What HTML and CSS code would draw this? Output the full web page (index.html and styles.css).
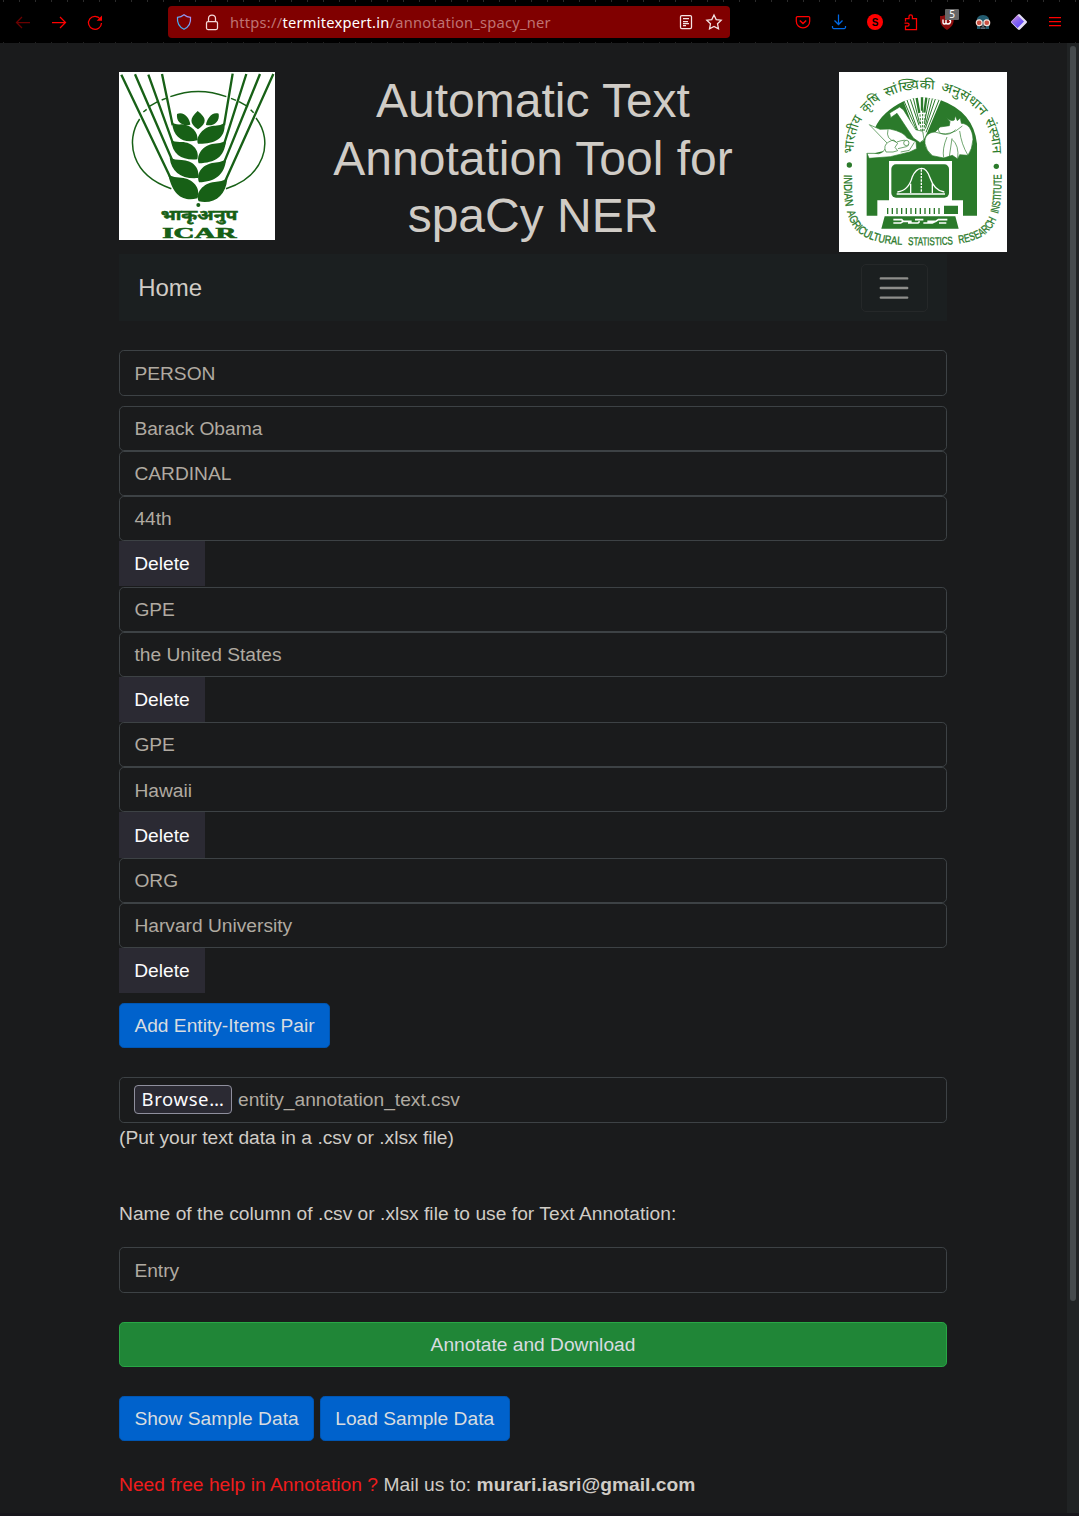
FILE: index.html
```html
<!DOCTYPE html>
<html lang="en">
<head>
<meta charset="utf-8">
<title>Automatic Text Annotation Tool for spaCy NER</title>
<link rel="stylesheet" href="styles.css">
</head>
<body>
<div class="toolbar">
  <div class="nav-icons">
    <svg class="icon" viewBox="0 0 16 16" stroke="#6b0000"><path d="M15 8.500H1.500M7 3 1.500 8.500 7 14"/></svg>
    <svg class="icon" viewBox="0 0 16 16" stroke="#f00"><path d="M1 8.500h13.500M9 3l5.500 5.500L9 14"/></svg>
    <svg class="icon" viewBox="0 0 16 16" stroke="#f00"><path d="M13.300 5A6.500 6.500 0 1 0 14.500 9"/><path d="M15 1.500v5.300h-5.300z" fill="#f00" stroke="none"/></svg>
  </div>
  <div class="urlbar">
    <svg class="icon" viewBox="0 0 16 16"><defs><linearGradient id="shield" x1="0" y1="1" x2="1" y2="0"><stop offset="0" stop-color="#20b6f0"/><stop offset="1" stop-color="#b68cf0"/></linearGradient></defs><path stroke="url(#shield)" d="M8 .8C6 2.400 3.800 3.200 1.500 3.400c-.5 5 1.200 9.400 6.500 11.800 5.300-2.400 7-6.800 6.500-11.800C12.200 3.200 10 2.400 8 .8Z"/></svg>
    <svg class="icon lock" viewBox="0 0 16 16" stroke="#f4d9d9"><rect x="2.500" y="7.500" width="11" height="8" rx="1.500"/><path d="M4.500 7.500v-3a3.500 3.500 0 0 1 7 0v3"/></svg>
    <span class="url">https://<b>termitexpert.in</b>/annotation_spacy_ner</span>
    <svg class="icon" viewBox="0 0 16 16" stroke="#f4e4e4"><rect x="2.500" y="1.500" width="11" height="13" rx="1.300"/><path d="M5 4.500h6M5 7.500h5M5 9.500h6M5 11.500h3"/></svg>
    <svg class="icon star" viewBox="0 0 16 16" stroke="#f4e4e4"><path d="m8 .9 2.200 4.700 5 .6-3.700 3.500 1 5.200L8 12.400l-4.500 2.500 1-5.200L.8 6.200l5-.6Z"/></svg>
  </div>
  <div class="extensions">
    <svg class="icon" viewBox="0 0 16 16" stroke="#f00"><path d="M2.500 2.500h11a1.200 1.200 0 0 1 1.200 1.200v3.500a6.700 6.700 0 0 1-13.400 0V3.700a1.200 1.200 0 0 1 1.200-1.200Z"/><path d="m4.800 6.500 3.200 3 3.200-3" stroke-width="1.500"/></svg>
    <svg class="icon" viewBox="0 0 16 16" stroke="#0069e6"><path d="M7.500.5v10M3.500 6.500l4 4 4-4M1.500 12v1.200a1.300 1.300 0 0 0 1.300 1.300h10.400a1.300 1.300 0 0 0 1.300-1.300V12"/></svg>
    <svg class="icon" viewBox="0 0 16 16"><circle cx="8" cy="8" r="8" fill="#f00"/><text x="8" y="11.500" class="s-mark">S</text></svg>
    <svg class="icon" viewBox="0 0 16 16" stroke="#f00"><path d="M2.500 7.500v-3H6V2.500a1.700 1.700 0 0 1 3.400 0v2h4.100v11h-11v-3.300h2a1.600 1.600 0 0 0 0-3.200h-3"/></svg>
    <span class="blocker"><svg class="icon" viewBox="0 0 16 16"><path fill="#8b0c0c" d="M8 0C6 1.400 4 2 1 2c0 7 .8 10 7 14 6.200-4 7-7 7-14C12 2 10 1.400 8 0Z"/><path d="M4 5.500v3q0 1.500 1.500 1.500T7 8.500V6m0 2.500Q7 10 9 10t2.500-2-1.500-2" stroke="#fff" stroke-width="1.400"/></svg><span class="badge">5</span></span>
    <svg class="icon" viewBox="0 0 16 16"><path fill="#235c70" d="M2 7C1 4 4 1 8 1s7 3 6 6v8H2Z"/><path fill="#111" d="M5 10h6v5H5z"/><path stroke="#789" d="M5.500 14h5M8 10v3"/><circle cx="4.200" cy="8.800" r="2.900" fill="#c95043" stroke="#f5ded5" stroke-width="1.200"/><circle cx="11.800" cy="8.800" r="2.900" fill="#c95043" stroke="#f5ded5" stroke-width="1.200"/></svg>
    <svg class="icon" viewBox="0 0 16 16"><defs><linearGradient id="gem" x1="0" y1="0" x2=".7" y2="1"><stop offset="0" stop-color="#f5a5cf"/><stop offset=".5" stop-color="#8a68ee"/><stop offset="1" stop-color="#5b45ff"/></linearGradient></defs><path fill="#e2dcf4" d="M7 .4q1-.8 2 0l6.500 6.500q1 1 0 2L9 15.600q-1 .8-2 0L.5 9q-1-1 0-2Z"/><path fill="url(#gem)" d="M6.500.9 13 7.400 6.600 13.900.8 8.600q-.8-.9 0-1.700Z"/></svg>
    <svg class="icon" viewBox="0 0 16 16" stroke="#f00"><path d="M2 3.500h12M2 7.500h12M2 11.500h12"/></svg>
  </div>
</div>
<div class="viewport">
  <main class="container">
    <header class="header">
      <svg class="logo-icar" viewBox="27 30 468 504">
        <rect x="27" y="30" width="468" height="504" fill="#fff"/>
        <g fill="none" stroke="#176016" stroke-width="4.500">
          <path d="M181 104Q265 73 349 104M363 109l15 6m9 4 27 15m8 9 9 9M168 109l-13 5m-12 5-25 14m-8 9-10 8M89 171C46 235 62 340 184 380M438 168C493 240 462 344 348 380"/>
          <path stroke-width="7" d="M34 38 190 365M75 37 189 300M115 38 190 247M156 36 188 190M368 35 342 190M409 36 342 247M450 36 342 302M490 36 342 365"/>
        </g>
        <g fill="#176016">
          <path d="M263 147C238 170 238 184 264 202 292 182 290 168 263 147ZM201 156C198 179 216 194 241 188 240 171 222 147 201 156ZM326 155C330 178 312 194 288 189 290 171 306 148 326 155Z"/>
          <path d="M186 181Q194 189 215 187C245 188 266 212 262 235 225 245 190 232 186 181ZM344 183Q330 192 312 191C280 193 256 224 264 245 310 246 347 234 344 183Z"/>
          <path d="M183 235Q194 241 215 240C247 240 270 265 262 292 218 296 188 280 183 235ZM348 237Q330 245 312 245C280 249 258 276 266 304 316 302 343 286 348 237Z"/>
          <path d="M179 287Q194 294 215 294C247 295 271 317 264 348 215 352 184 330 179 287ZM348 293Q330 301 312 302C280 306 257 330 267 361 315 359 344 338 348 293Z"/>
          <path d="M175 339Q192 347 214 347C249 350 274 377 262 409 225 418 190 407 175 339ZM352 350Q334 359 314 360C278 364 256 392 266 418 312 427 347 403 352 350Z"/>
          <circle cx="265" cy="429" r="6"/>
          <text x="152" y="475" class="hindi-name" textLength="230" lengthAdjust="spacingAndGlyphs">भाकृअनुप</text>
          <text x="157" y="529" class="icar-name" textLength="222" lengthAdjust="spacingAndGlyphs">ICAR</text>
        </g>
      </svg>
      <h1 class="title">Automatic Text Annotation Tool for spaCy NER</h1>
      <svg class="logo-iasri" viewBox="27 30 504 540">
        <defs>
          <path id="arc-top" d="M70 278C70 150 160 82 278 82S488 150 488 278V300"/>
          <path id="arc-bottom" d="M42 338C38 522 90 550 280 550S518 522 514 338V310"/>
        </defs>
        <rect x="27" y="30" width="504" height="540" fill="#fff"/>
        <path fill="#2b7a2b" d="M110 461V274H132L190 260 135 198Q155 150 222 117Q275 98 333 115Q430 150 441 245V461H399V415H366V297H177V415H142V461Z"/>
        <path fill="#fff" d="M220 116Q276 98 333 114L292 211 279 238 264 236Z"/>
        <g stroke="#2b7a2b" stroke-width="3" fill="none"><path d="M222 117 266 218M231 114 270 225M241 112 267 190M250 109 269 185M307 110 286 190M316 111 286 200M327 114 288 211M298 108 284 180"/><path stroke-width="7" d="M260 108l8 45M276 106v40M289 107l-6 45"/><path stroke-dasharray="7 4" d="M278 145v72M270 157l3 50M286 157l-4 50"/></g>
        <g fill="#fff" stroke="#2b7a2b" stroke-width="2">
          <path d="M118 188 150 202 180 201Q220 209 232 228L258 239 260 260 239 270 181 284 117 289 111 274H132Q163 282 172 244Z"/>
          <path d="M179 153 209 135 220 143 257 203 278 208 282 232 270 242 250 228 201 154 182 167Z"/>
          <path d="M168 270q-10-20 8-30t17-3l10 7-8 12 8 10-14 4ZM200 240q30-10 32-1 8 12-3 15l-25 6M174 203q-8 30 24 36M212 270l26-5 15-24"/>
          <circle cx="229" cy="243" r="8"/>
          <path d="M285 245C282 220 298 211 315 210L330 195 358 191 360 179 348 165Q362 180 373 174L376 161 382 176 391 168 394 184C414 184 428 203 429 232Q427 262 414 280L389 278 383 291 367 280 341 288 307 281Q288 266 285 245Z"/>
          <path fill="none" d="M315 210q32 12 62-3l20-15M326 196q-4 18 15 21t36-14M366 232q22 18 17 58M351 225q-15 36-10 62M389 207q5 40 25 73M366 229l-8 55"/>
        </g>
        <rect x="184" y="307" width="173" height="100" rx="14" fill="#2b7a2b"/>
        <g fill="none" stroke="#fff" stroke-width="4"><path d="M202 390Q236 386 247 344Q258 320 274 319T300 347Q313 386 343 390M200 396h145M242 365v28M307 365v28"/><path stroke-dasharray="7 3" d="M274 322v70"/></g>
        <path fill="#2b7a2b" d="M342 431h42v25h-42ZM164 463H376L386 500H154Z"/>
        <path d="M173 438v18m14-18v18m14-18v18m14-18v18m14-18v18m14-18v18m14-18v18m14-18v18m14-18v18m14-18v18m14-18v18m14-18v18" stroke="#2b7a2b" stroke-width="4"/>
        <path d="M190 473h25l5 5h25m10-5h25m12 5h25l8-5h27M190 483h22l8-5m14 5h30l5-5m11 5h27l10-5m10 5h22" fill="none" stroke="#fff" stroke-width="5"/>
        <circle cx="58" cy="309" r="8" fill="#2b7a2b"/><circle cx="499" cy="313" r="8" fill="#2b7a2b"/>
        <g class="arc-hindi">
          <text><textPath href="#arc-top" startOffset="2" textLength="112" lengthAdjust="spacingAndGlyphs">भारतीय</textPath></text>
          <text><textPath href="#arc-top" startOffset="132" textLength="60" lengthAdjust="spacingAndGlyphs">कृषि</textPath></text>
          <text><textPath href="#arc-top" startOffset="210" textLength="148" lengthAdjust="spacingAndGlyphs">सांख्यिकी</textPath></text>
          <text><textPath href="#arc-top" startOffset="376" textLength="148" lengthAdjust="spacingAndGlyphs">अनुसंधान</textPath></text>
          <text><textPath href="#arc-top" startOffset="540" textLength="104" lengthAdjust="spacingAndGlyphs">संस्थान</textPath></text>
        </g>
        <g class="arc-english">
          <text><textPath href="#arc-bottom" startOffset="0" textLength="97" lengthAdjust="spacingAndGlyphs">INDIAN</textPath></text>
          <text><textPath href="#arc-bottom" startOffset="112" textLength="210" lengthAdjust="spacingAndGlyphs">AGRICULTURAL</textPath></text>
          <text><textPath href="#arc-bottom" startOffset="340" textLength="135" lengthAdjust="spacingAndGlyphs">STATISTICS</textPath></text>
          <text><textPath href="#arc-bottom" startOffset="493" textLength="141" lengthAdjust="spacingAndGlyphs">RESEARCH</textPath></text>
          <text><textPath href="#arc-bottom" startOffset="650" textLength="120" lengthAdjust="spacingAndGlyphs">INSTITUTE</textPath></text>
        </g>
      </svg>
    </header>
    <nav class="navbar"><a class="brand">Home</a><button class="toggler" aria-label="Menu"><svg viewBox="0 0 30 30"><path d="M4 7h22M4 15h22M4 23h22" stroke="#8e8e8b" stroke-width="2" stroke-linecap="round"/></svg></button></nav>
    <div class="field first">PERSON</div>
    <div class="field">Barack Obama</div>
    <div class="field">CARDINAL</div>
    <div class="field">44th</div>
    <button class="delete spaced">Delete</button>
    <div class="field">GPE</div>
    <div class="field">the United States</div>
    <button class="delete">Delete</button>
    <div class="field">GPE</div>
    <div class="field">Hawaii</div>
    <button class="delete">Delete</button>
    <div class="field">ORG</div>
    <div class="field">Harvard University</div>
    <button class="delete">Delete</button>
    <button class="btn add">Add Entity-Items Pair</button>
    <div class="field file"><span class="browse">Browse…</span><span class="filename">entity_annotation_text.csv</span></div>
    <p class="hint">(Put your text data in a .csv or .xlsx file)</p>
    <p class="column-label">Name of the column of .csv or .xlsx file to use for Text Annotation:</p>
    <div class="field entry">Entry</div>
    <button class="btn submit">Annotate and Download</button>
    <div class="samples"><button class="btn">Show Sample Data</button><button class="btn">Load Sample Data</button></div>
    <p class="contact"><span>Need free help in Annotation ?</span> Mail us to: <b>murari.iasri@gmail.com</b></p>
  </main>
  <div class="scrollbar"><div class="thumb"></div></div>
</div>
</body>
</html>
```
FILE: styles.css
```css
* { box-sizing: border-box; }
body {
  margin: 0;
  height: 1516px;
  overflow: hidden;
  background: #1a1b1c;
  color: #d0ccc6;
  font: 19.2px/28.8px "Liberation Sans", Arial, sans-serif;
}
p, h1 { margin: 0; font-weight: 400; }
button { font: inherit; color: inherit; margin: 0; }

.toolbar {
  height: 43px;
  display: flex;
  align-items: center;
  padding: 1px 16px 0 15px;
  background:
    repeating-linear-gradient(90deg, transparent 0 3px, #2b2b2b 3px 4px, transparent 4px 16px) 0 0 / 100% 2px no-repeat,
    repeating-linear-gradient(90deg, transparent 0 3px, #222 3px 4px, transparent 4px 16px) 0 100% / 100% 1px no-repeat,
    #000;
}
.icon { width: 16px; height: 16px; flex: none; fill: none; stroke-width: 1.25; display: block; overflow: visible; }
.nav-icons { display: flex; gap: 20px; width: 153px; }
.urlbar {
  width: 562px;
  height: 32px;
  display: flex;
  align-items: center;
  padding: 0 8px;
  border-radius: 4px;
  background: #800000;
}
.lock { margin-left: 12px; }
.url {
  flex: 1;
  margin-left: 10px;
  font: 14.67px/20px "Noto Sans", sans-serif;
  letter-spacing: .24px;
  color: #bf7373;
  white-space: nowrap;
}
.url b { font-weight: 400; color: #fff; }
.star { margin-left: 12px; }
.extensions { display: flex; gap: 20px; margin-left: auto; }
.s-mark { font: bold 10px "Liberation Sans", sans-serif; fill: #000; text-anchor: middle; }
.blocker { position: relative; }
.badge {
  position: absolute;
  left: 6px;
  top: -5px;
  width: 14px;
  height: 11px;
  border-radius: 1px;
  background: #666;
  color: #fff;
  font: 10px/11px "Noto Sans", sans-serif;
  text-align: center;
}

.viewport { display: flex; justify-content: space-between; height: 1473px; border-bottom: 3px solid #17161b; }
.container { width: 828px; margin-left: 119px; padding-top: 29px; }
.header { display: flex; height: 181.8px; width: 888px; align-items: flex-start; }
.logo-icar { width: 156px; height: 168px; flex: none; overflow: visible; }
.title {
  width: 450px;
  margin: 0 81px 0 33px;
  font-size: 48px;
  line-height: 57.6px;
  text-align: center;
}
.logo-iasri { width: 168px; height: 180px; flex: none; overflow: visible; }
.hindi-name { font: bold 42px "Noto Sans Devanagari", "Noto Sans", sans-serif; stroke: #176016; stroke-width: 1.5; }
.icar-name { font: bold 46px "Liberation Serif", serif; stroke: #176016; stroke-width: 2; }
.arc-hindi { font: 40px "Noto Sans Devanagari", "Noto Sans", sans-serif; fill: #2b7a2b; }
.arc-english { font: 34px "Liberation Sans", sans-serif; fill: #2b7a2b; stroke: #2b7a2b; stroke-width: 1; }

.navbar {
  height: 67.6px;
  display: flex;
  align-items: center;
  justify-content: space-between;
  padding: 0 19.2px;
  background: #1b1f20;
}
.brand { font-size: 24px; line-height: 36px; }
.toggler {
  width: 67px;
  height: 48px;
  padding: 0;
  display: grid;
  place-items: center;
  border: 1px solid #252829;
  border-radius: 5px;
  background: none;
}
.toggler svg { width: 36px; height: 36px; }

.field {
  height: 45.2px;
  padding: 8.4px 14.4px 6px;
  border: 1px solid #3d4245;
  border-radius: 4.8px;
  color: #b0aaa1;
}
.first { margin: 29px 0 9.95px; }
.delete {
  display: block;
  width: 86px;
  height: 45.2px;
  border: 0;
  padding: 2.4px 0 0;
  background: #2b2a33;
  color: #fbfbfe;
}
.spaced { margin-bottom: .25px; }
.btn {
  height: 45.2px;
  padding: 8.1px 14.4px 6.3px;
  border: 1px solid #0056b3;
  border-radius: 4.8px;
  background: #0062cc;
  color: #d8dce0;
  line-height: 28.8px;
}
.add { display: block; margin: 9.6px 0 28.8px; }
.file { display: flex; align-items: center; height: 46px; padding: 0 14px; }
.filename { padding-top: 1px; }
.browse {
  width: 98px;
  height: 29px;
  margin-right: 6px;
  border: 1px solid #8f8f9d;
  border-radius: 4px;
  background: #2b2a33;
  color: #fbfbfe;
  font: 18.5px/26px "Noto Sans", sans-serif;
  letter-spacing: .6px;
  text-align: center;
}
.hint { padding-top: .8px; }
.column-label { margin: 47.2px 0 18.7px; letter-spacing: .03px; }
.entry { height: 45.8px; padding-top: 8.8px; }
.submit {
  display: block;
  width: 100%;
  margin: 28.8px 0;
  border-color: #28a745;
  background: #208637;
}
.samples { display: flex; gap: 5.8px; margin-bottom: 30px; }
.contact { letter-spacing: .03px; }
.contact span { color: #f01c1c; }
.scrollbar { width: 12px; background: #202324; padding: 3px; }
.thumb { width: 6px; height: 1255px; border-radius: 3px; background: #454a4c; }
```
